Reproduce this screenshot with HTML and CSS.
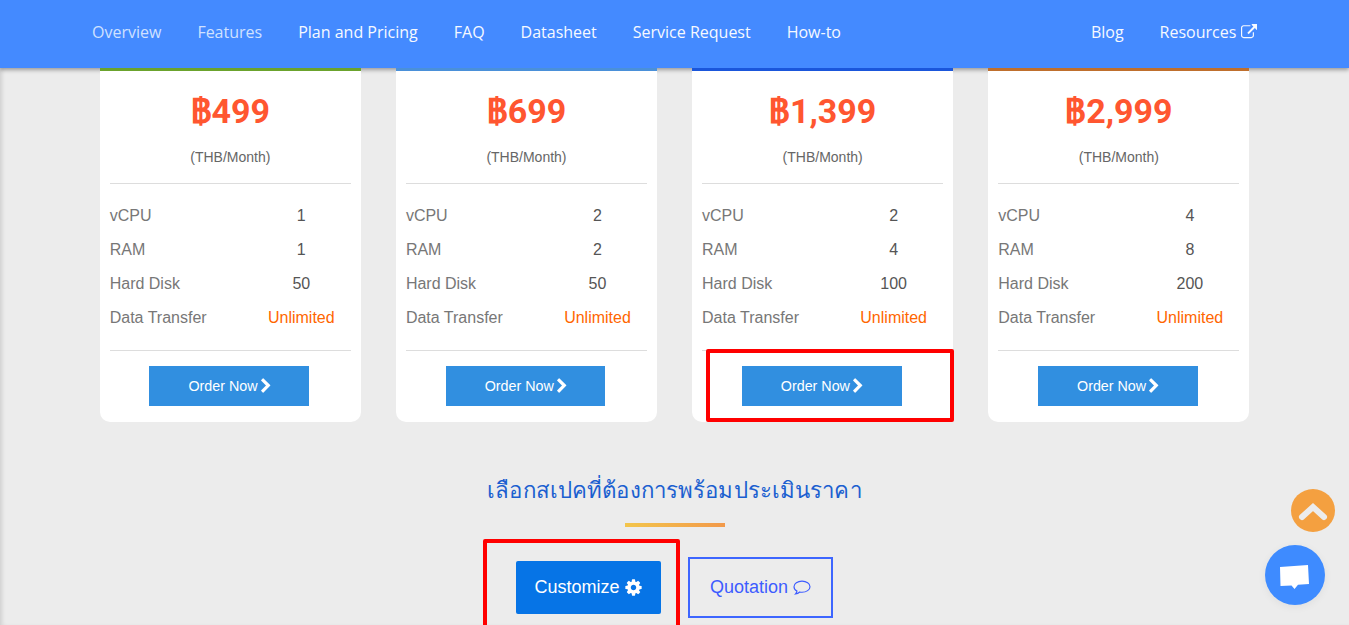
FILE: index.html
```html
<!DOCTYPE html>
<html lang="th">
  <head>
    <meta charset="UTF-8" />
    <title>Plan and Pricing</title>
    <link rel="stylesheet" href="styles.css">
  </head>
  <body>
    <svg class="sprite" aria-hidden="true">
      <symbol id="chev" viewBox="0 0 1792 1792">
        <path d="M1363 877l-742 742q-19 19-45 19t-45-19l-166-166q-19-19-19-45t19-45l531-531-531-531q-19-19-19-45t19-45l166-166q19-19 45-19t45 19l742 742q19 19 19 45t-19 45z" />
      </symbol>
    </svg>

    <nav class="topnav">
      <a class="dim" href="#">Overview</a>
      <a class="dim" href="#">Features</a>
      <a href="#">Plan and Pricing</a>
      <a href="#">FAQ</a>
      <a href="#">Datasheet</a>
      <a href="#">Service Request</a>
      <a href="#">How-to</a>
      <span class="spacer"></span>
      <a href="#">Blog</a>
      <a href="#">Resources
        <svg class="ext" viewBox="0 0 1792 1792"><path d="M1408 928v320q0 119-84.5 203.5t-203.5 84.5h-832q-119 0-203.5-84.5t-84.5-203.5v-832q0-119 84.5-203.5t203.5-84.5h704q14 0 23 9t9 23v64q0 14-9 23t-23 9h-704q-66 0-113 47t-47 113v832q0 66 47 113t113 47h832q66 0 113-47t47-113v-320q0-14 9-23t23-9h64q14 0 23 9t9 23zm384-864v512q0 26-19 45t-45 19-45-19l-176-176-652 652q-10 10-23 10t-23-10l-114-114q-10-10-10-23t10-23l652-652-176-176q-19-19-19-45t19-45 45-19h512q26 0 45 19t19 45z" /></svg>
      </a>
    </nav>

    <main class="pricing">
      <div class="cards">
        <div class="card green">
          <div class="price">฿499</div>
          <div class="per">(THB/Month)</div>
          <div class="specs">
            <span>vCPU</span><b>1</b>
            <span>RAM</span><b>1</b>
            <span>Hard Disk</span><b>50</b>
            <span>Data Transfer</span><b class="unl">Unlimited</b>
          </div>
          <div class="order"><a class="btn-order" href="#">Order Now <svg><use href="#chev" /></svg></a></div>
        </div>
        <div class="card sky">
          <div class="price">฿699</div>
          <div class="per">(THB/Month)</div>
          <div class="specs">
            <span>vCPU</span><b>2</b>
            <span>RAM</span><b>2</b>
            <span>Hard Disk</span><b>50</b>
            <span>Data Transfer</span><b class="unl">Unlimited</b>
          </div>
          <div class="order"><a class="btn-order" href="#">Order Now <svg><use href="#chev" /></svg></a></div>
        </div>
        <div class="card navy">
          <div class="price">฿1,399</div>
          <div class="per">(THB/Month)</div>
          <div class="specs">
            <span>vCPU</span><b>2</b>
            <span>RAM</span><b>4</b>
            <span>Hard Disk</span><b>100</b>
            <span>Data Transfer</span><b class="unl">Unlimited</b>
          </div>
          <div class="order"><a class="btn-order" href="#">Order Now <svg><use href="#chev" /></svg></a></div>
          <div class="mark mark-order"></div>
        </div>
        <div class="card rust">
          <div class="price">฿2,999</div>
          <div class="per">(THB/Month)</div>
          <div class="specs">
            <span>vCPU</span><b>4</b>
            <span>RAM</span><b>8</b>
            <span>Hard Disk</span><b>200</b>
            <span>Data Transfer</span><b class="unl">Unlimited</b>
          </div>
          <div class="order"><a class="btn-order" href="#">Order Now <svg><use href="#chev" /></svg></a></div>
        </div>
      </div>

      <h2 class="custom-title">เลือกสเปคที่ต้องการพร้อมประเมินราคา</h2>
      <div class="underline"></div>

      <div class="custom-btns">
        <a class="btn-custom" href="#">Customize
          <svg viewBox="0 0 1792 1792"><path d="M1152 896q0-106-75-181t-181-75-181 75-75 181 75 181 181 75 181-75 75-181zm512-109v222q0 12-8 23t-20 13l-185 28q-19 54-39 91 35 50 107 138 10 12 10 25t-9 23q-27 37-99 108t-94 71q-12 0-26-9l-138-108q-44 23-91 38-16 136-29 186-7 28-36 28h-222q-14 0-24.5-8.5t-11.5-21.5l-28-184q-49-16-90-37l-141 107q-10 9-25 9-14 0-25-11-126-114-165-168-7-10-7-23 0-12 8-23 15-21 51-66.5t54-70.5q-27-50-41-99l-183-27q-13-2-21-12.5t-8-23.5v-222q0-12 8-23t19-13l186-28q14-46 39-92-40-57-107-138-10-12-10-24 0-10 9-23 26-36 98.5-107.5t94.5-71.5q13 0 26 10l138 107q44-23 91-38 16-136 29-186 7-28 36-28h222q14 0 24.5 8.5t11.5 21.5l28 184q49 16 90 37l142-107q9-9 24-9 13 0 25 10 129 119 165 170 7 8 7 22 0 12-8 23-15 21-51 66.5t-54 70.5q26 50 41 98l183 28q13 2 21 12.5t8 23.5z" /></svg>
          <div class="mark mark-custom"></div>
        </a>
        <a class="btn-quote" href="#">Quotation
          <svg viewBox="0 0 20 18"><path d="M10 1.2c-5 0-9 2.700-9 6.300 0 2 1.300 3.800 3.300 5-.2 1.200-.8 2.300-1.700 3.300 1.900-.3 3.500-1.100 4.900-2.300.8.200 1.600.3 2.500.3 5 0 9-2.800 9-6.300s-4-6.300-9-6.300z" /></svg>
        </a>
      </div>
    </main>

    <a class="to-top" href="#">
      <svg viewBox="0 0 44 44"><path d="M11 28l11-10 11 10" /></svg>
    </a>
    <a class="chat" href="#">
      <svg viewBox="0 0 60 60"><path d="M15 22l28-2 1 19-11 .8-3.500 4.200-3-3.500-11 .5z" /></svg>
    </a>
  </body>
</html>
```

FILE: styles.css
```css
* {
  box-sizing: border-box;
}
html,
body {
  height: 625px;
  margin: 0;
  overflow: hidden;
}
body {
  font-family: "Liberation Sans", Arial, sans-serif;
  background: #ececec;
  box-shadow: inset 4px 0 4px -2px rgba(0, 0, 0, 0.12);
}
a {
  text-decoration: none;
}
.sprite {
  display: none;
}

.topnav {
  display: flex;
  align-items: center;
  gap: 36px;
  height: 68px;
  padding: 0 92px 4px;
  background: #448aff;
  box-shadow: 0 2px 4px rgba(0, 0, 0, 0.35);
  font-family: "Open Sans", sans-serif;
  font-size: 16px;
}
.topnav a {
  color: #f6f9ff;
  white-space: nowrap;
}
.topnav a.dim {
  color: #d0e1ff;
}
.spacer {
  flex: 1;
}
.ext {
  width: 16.5px;
  height: 16.5px;
  fill: currentColor;
  vertical-align: -2px;
}

.pricing {
  position: relative;
}
.cards {
  display: flex;
  gap: 35px;
  padding-left: 99.7px;
}
.card {
  position: relative;
  width: 261.2px;
  height: 354px;
  padding: 0 10px;
  background: #fff;
  border-top: 3px solid;
  border-radius: 0 0 10px 10px;
}
.card.green {
  border-color: #6ba32d;
}
.card.sky {
  border-color: #4a90d9;
}
.card.navy {
  border-color: #1a56db;
}
.card.rust {
  border-color: #bf6f2d;
}
.price {
  padding-top: 18px;
  color: #ff5630;
  font-family: Roboto, "Liberation Sans", sans-serif;
  font-size: 34px;
  font-weight: 700;
  line-height: 44px;
  text-align: center;
}
.per {
  margin-top: 14px;
  padding-bottom: 16px;
  border-bottom: 1px solid #ddd;
  color: #666;
  font-size: 14px;
  line-height: 20px;
  text-align: center;
}
.specs {
  display: grid;
  grid-template-columns: 142px 99.2px;
  grid-auto-rows: 34px;
  align-items: center;
  padding: 15px 0;
  border-bottom: 1px solid #ddd;
  color: #777;
  font-size: 16px;
}
.specs b {
  color: #555;
  font-weight: 400;
  text-align: center;
}
.specs b.unl {
  color: #ff6600;
}
.order {
  display: flex;
  justify-content: center;
  padding: 15px 2px 0 0;
}
.btn-order {
  display: flex;
  align-items: center;
  justify-content: center;
  width: 159.8px;
  height: 40px;
  background: #318fe0;
  color: #fff;
  font-size: 14.3px;
}
.btn-order svg {
  width: 16px;
  height: 16px;
  margin-right: -3.5px;
  fill: #fff;
}

.custom-title {
  margin: 52px 0 0;
  color: #1b5fd0;
  font-family: "Noto Sans", "Liberation Sans", sans-serif;
  font-size: 22.25px;
  font-weight: 400;
  letter-spacing: 0.12px;
  line-height: 32px;
  text-align: center;
}
.underline {
  width: 100px;
  height: 4px;
  margin: 17px auto 0;
  background: linear-gradient(to right, #f3c54b, #f2994a);
}
.custom-btns {
  display: flex;
  align-items: center;
  justify-content: center;
  gap: 27px;
  margin-top: 30px;
}
.btn-custom {
  position: relative;
  display: flex;
  align-items: center;
  justify-content: center;
  gap: 4px;
  width: 145px;
  height: 53px;
  background: #0674e6;
  border-radius: 2px;
  color: #fff;
  font-size: 18px;
}
.btn-custom svg {
  width: 19px;
  height: 19px;
  fill: #fff;
}
.btn-quote {
  display: flex;
  align-items: center;
  justify-content: center;
  gap: 5px;
  width: 145px;
  height: 61px;
  border: 2px solid #3d66ff;
  color: #3d5cff;
  font-size: 18px;
}
.btn-quote svg {
  width: 18px;
  height: 16px;
  fill: none;
  stroke: #3d5cff;
  stroke-width: 1.3;
}

/* red annotation boxes sit over the buttons */
.mark {
  position: absolute;
  border: 4px solid #f00;
  border-radius: 2px;
  pointer-events: none;
}
.mark-order {
  left: 14px;
  top: 278px;
  width: 248px;
  height: 73px;
}
.mark-custom {
  left: -33px;
  top: -22px;
  width: 197px;
  height: 100px;
}

.to-top {
  position: fixed;
  left: 1291px;
  top: 489px;
  width: 44px;
  height: 43px;
  background: #f4a040;
  border-radius: 50%;
}
.to-top svg {
  display: block;
  fill: none;
  stroke: #ececec;
  stroke-width: 6;
  stroke-linecap: round;
}
.chat {
  position: fixed;
  left: 1265px;
  top: 545px;
  width: 60px;
  height: 60px;
  background: #3e8bff;
  border-radius: 50%;
  box-shadow: 0 2px 8px rgba(0, 0, 0, 0.06);
}
.chat svg {
  display: block;
  fill: #fff;
}
```
